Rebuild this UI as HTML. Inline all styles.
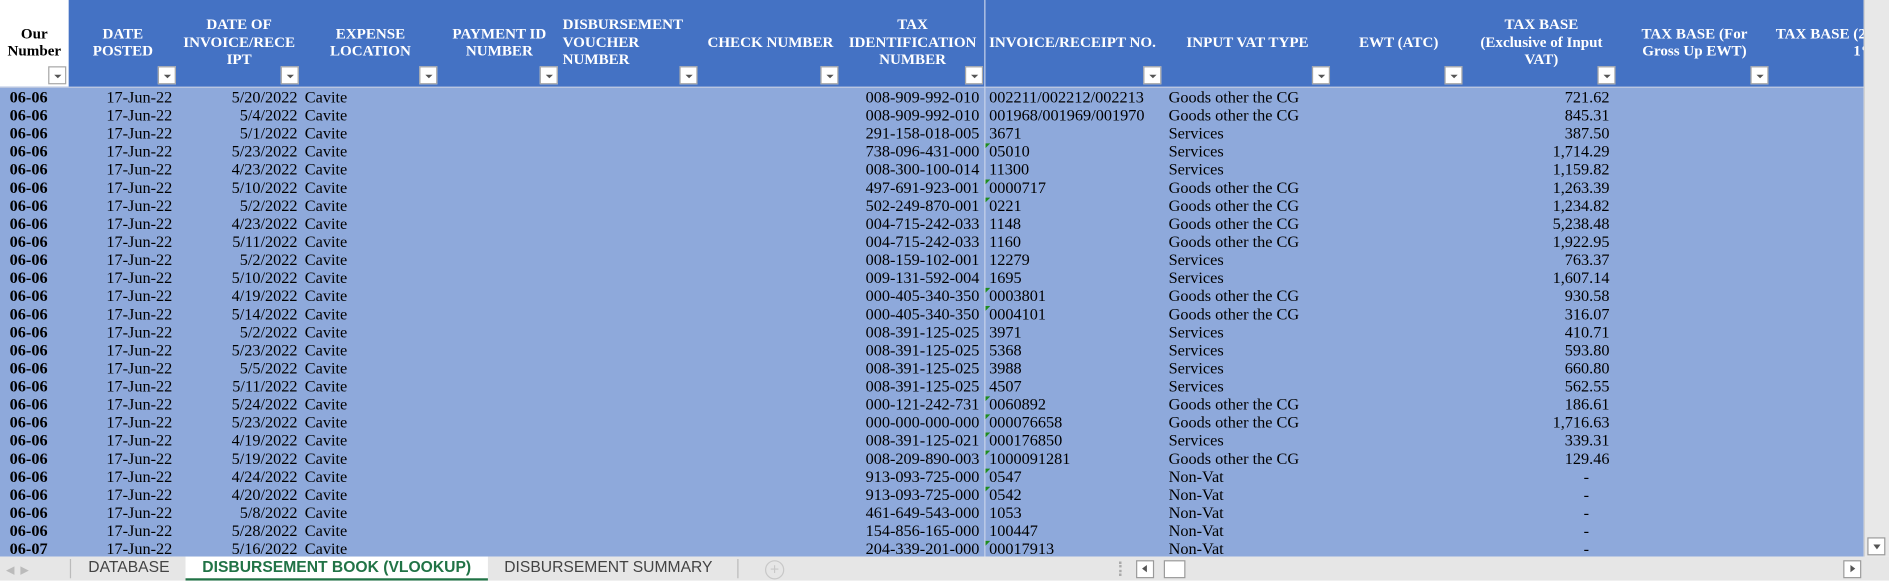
<!DOCTYPE html>
<html><head><meta charset="utf-8"><style>
html,body{margin:0;padding:0;width:1889px;height:581px;overflow:hidden;background:#fff}
#w{position:absolute;left:0;top:0;width:1568px;height:482.3px;transform:scale(1.20472);transform-origin:0 0;font-family:"Liberation Serif",serif;overflow:hidden}
#hd{position:absolute;left:0;top:0;width:1547px;height:72px;background:#4472C4}
.h{position:absolute;top:0;height:72px;color:#fff;font-weight:bold;font-size:12.5px;line-height:14.5px;display:flex;align-items:center;justify-content:center;text-align:center;padding-bottom:2px;box-sizing:border-box;overflow:hidden}
.dd{position:absolute;top:55px;width:15px;height:15px;background:#fff;border:1px solid #a6a6a6;box-sizing:border-box}
.dd::after{content:"";position:absolute;left:4px;top:6px;border-left:3px solid transparent;border-right:3px solid transparent;border-top:3px solid #555}
#body{position:absolute;left:0;top:72px;width:1547px;height:390px;background:#8EA9DB;border-top:1px solid #bcc8e0;box-sizing:border-box}
.r{height:15px;display:flex;font-size:13.5px;line-height:15px;white-space:nowrap;color:#000}
.r span{display:block;overflow:hidden;box-sizing:border-box;flex:none}
.r span:nth-child(1){width:57px;padding-left:8px;font-weight:bold}
.r span:nth-child(2){width:90px;text-align:right;padding-right:4px}
.r span:nth-child(3){width:103px;text-align:right;padding-right:3px}
.r span:nth-child(4){width:115px;padding-left:3px}
.r span:nth-child(5){width:99px}
.r span:nth-child(6){width:117px}
.r span:nth-child(7){width:117px}
.r span:nth-child(8){width:119px;text-align:right;padding-right:4px}
.r span:nth-child(9){width:148px;padding-left:4px;position:relative}
.r span:nth-child(10){width:141px;padding-left:5px}
.r span:nth-child(11){width:110px}
.r span:nth-child(12){width:127px;text-align:right;padding-right:7px}
.r span.d{padding-right:24px}
.r span.t::before{content:"";position:absolute;left:1px;top:1px;border-top:4px solid #1e8c1e;border-right:4px solid transparent}
#vl{position:absolute;left:817px;top:0;width:1px;height:462px;background:#c8d3ea}
#vs{position:absolute;left:1547px;top:0;width:21px;height:462px;background:#e8e8e8;border-left:1px solid #d0d0d0;box-sizing:border-box}
#vs .b{position:absolute;left:2px;top:446px;width:15px;height:15px;background:#fff;border:1px solid #999;box-sizing:border-box}
#tb{position:absolute;left:0;top:462px;width:1568px;height:21px;background:#e6e6e6;font-family:"Liberation Sans",sans-serif;font-size:13px;color:#444}
.tab{position:absolute;top:0;height:20px;line-height:17px}
</style></head><body><div id="w">
<div id="hd"></div>
<div class="h" style="left:0;width:57px;background:#fff;color:#000">Our<br>Number</div>
<div class="dd" style="left:40px"></div>
<div class="h" style="left:57px;width:90px">DATE<br>POSTED</div><div class="dd" style="left:131px"></div>
<div class="h" style="left:147px;width:103px">DATE OF<br>INVOICE/RECE<br>IPT</div><div class="dd" style="left:233px"></div>
<div class="h" style="left:250px;width:115px">EXPENSE<br>LOCATION</div><div class="dd" style="left:348px"></div>
<div class="h" style="left:365px;width:99px">PAYMENT ID<br>NUMBER</div><div class="dd" style="left:448px"></div>
<div class="h" style="left:464px;width:117px;justify-content:flex-start;text-align:left;padding-left:3px">DISBURSEMENT<br>VOUCHER<br>NUMBER</div><div class="dd" style="left:564px"></div>
<div class="h" style="left:581px;width:117px">CHECK NUMBER</div><div class="dd" style="left:681px"></div>
<div class="h" style="left:698px;width:119px">TAX<br>IDENTIFICATION<br>NUMBER</div><div class="dd" style="left:801px"></div>
<div class="h" style="left:817px;width:148px;justify-content:flex-start;padding-left:4px">INVOICE/RECEIPT NO.</div><div class="dd" style="left:949px"></div>
<div class="h" style="left:965px;width:141px">INPUT VAT TYPE</div><div class="dd" style="left:1089px"></div>
<div class="h" style="left:1106px;width:110px">EWT (ATC)</div><div class="dd" style="left:1199px"></div>
<div class="h" style="left:1216px;width:127px">TAX BASE<br>(Exclusive of Input<br>VAT)</div><div class="dd" style="left:1326px"></div>
<div class="h" style="left:1343px;width:127px">TAX BASE (For<br>Gross Up EWT)</div><div class="dd" style="left:1453px"></div>
<div class="h" style="left:1470px;width:77px;justify-content:flex-start;text-align:right;white-space:nowrap;padding-left:4px">TAX BASE (2%<br>&nbsp;&nbsp;&nbsp;&nbsp;&nbsp;&nbsp;&nbsp;&nbsp;&nbsp;&nbsp;&nbsp;&nbsp;1%)</div>
<div id="body">
<div class="r"><span>06-06</span><span>17-Jun-22</span><span>5/20/2022</span><span>Cavite</span><span></span><span></span><span></span><span>008-909-992-010</span><span>002211/002212/002213</span><span>Goods other the CG</span><span></span><span>721.62</span></div>
<div class="r"><span>06-06</span><span>17-Jun-22</span><span>5/4/2022</span><span>Cavite</span><span></span><span></span><span></span><span>008-909-992-010</span><span>001968/001969/001970</span><span>Goods other the CG</span><span></span><span>845.31</span></div>
<div class="r"><span>06-06</span><span>17-Jun-22</span><span>5/1/2022</span><span>Cavite</span><span></span><span></span><span></span><span>291-158-018-005</span><span>3671</span><span>Services</span><span></span><span>387.50</span></div>
<div class="r"><span>06-06</span><span>17-Jun-22</span><span>5/23/2022</span><span>Cavite</span><span></span><span></span><span></span><span>738-096-431-000</span><span class="t">05010</span><span>Services</span><span></span><span>1,714.29</span></div>
<div class="r"><span>06-06</span><span>17-Jun-22</span><span>4/23/2022</span><span>Cavite</span><span></span><span></span><span></span><span>008-300-100-014</span><span>11300</span><span>Services</span><span></span><span>1,159.82</span></div>
<div class="r"><span>06-06</span><span>17-Jun-22</span><span>5/10/2022</span><span>Cavite</span><span></span><span></span><span></span><span>497-691-923-001</span><span class="t">0000717</span><span>Goods other the CG</span><span></span><span>1,263.39</span></div>
<div class="r"><span>06-06</span><span>17-Jun-22</span><span>5/2/2022</span><span>Cavite</span><span></span><span></span><span></span><span>502-249-870-001</span><span class="t">0221</span><span>Goods other the CG</span><span></span><span>1,234.82</span></div>
<div class="r"><span>06-06</span><span>17-Jun-22</span><span>4/23/2022</span><span>Cavite</span><span></span><span></span><span></span><span>004-715-242-033</span><span>1148</span><span>Goods other the CG</span><span></span><span>5,238.48</span></div>
<div class="r"><span>06-06</span><span>17-Jun-22</span><span>5/11/2022</span><span>Cavite</span><span></span><span></span><span></span><span>004-715-242-033</span><span>1160</span><span>Goods other the CG</span><span></span><span>1,922.95</span></div>
<div class="r"><span>06-06</span><span>17-Jun-22</span><span>5/2/2022</span><span>Cavite</span><span></span><span></span><span></span><span>008-159-102-001</span><span>12279</span><span>Services</span><span></span><span>763.37</span></div>
<div class="r"><span>06-06</span><span>17-Jun-22</span><span>5/10/2022</span><span>Cavite</span><span></span><span></span><span></span><span>009-131-592-004</span><span>1695</span><span>Services</span><span></span><span>1,607.14</span></div>
<div class="r"><span>06-06</span><span>17-Jun-22</span><span>4/19/2022</span><span>Cavite</span><span></span><span></span><span></span><span>000-405-340-350</span><span class="t">0003801</span><span>Goods other the CG</span><span></span><span>930.58</span></div>
<div class="r"><span>06-06</span><span>17-Jun-22</span><span>5/14/2022</span><span>Cavite</span><span></span><span></span><span></span><span>000-405-340-350</span><span class="t">0004101</span><span>Goods other the CG</span><span></span><span>316.07</span></div>
<div class="r"><span>06-06</span><span>17-Jun-22</span><span>5/2/2022</span><span>Cavite</span><span></span><span></span><span></span><span>008-391-125-025</span><span>3971</span><span>Services</span><span></span><span>410.71</span></div>
<div class="r"><span>06-06</span><span>17-Jun-22</span><span>5/23/2022</span><span>Cavite</span><span></span><span></span><span></span><span>008-391-125-025</span><span>5368</span><span>Services</span><span></span><span>593.80</span></div>
<div class="r"><span>06-06</span><span>17-Jun-22</span><span>5/5/2022</span><span>Cavite</span><span></span><span></span><span></span><span>008-391-125-025</span><span>3988</span><span>Services</span><span></span><span>660.80</span></div>
<div class="r"><span>06-06</span><span>17-Jun-22</span><span>5/11/2022</span><span>Cavite</span><span></span><span></span><span></span><span>008-391-125-025</span><span>4507</span><span>Services</span><span></span><span>562.55</span></div>
<div class="r"><span>06-06</span><span>17-Jun-22</span><span>5/24/2022</span><span>Cavite</span><span></span><span></span><span></span><span>000-121-242-731</span><span class="t">0060892</span><span>Goods other the CG</span><span></span><span>186.61</span></div>
<div class="r"><span>06-06</span><span>17-Jun-22</span><span>5/23/2022</span><span>Cavite</span><span></span><span></span><span></span><span>000-000-000-000</span><span class="t">000076658</span><span>Goods other the CG</span><span></span><span>1,716.63</span></div>
<div class="r"><span>06-06</span><span>17-Jun-22</span><span>4/19/2022</span><span>Cavite</span><span></span><span></span><span></span><span>008-391-125-021</span><span class="t">000176850</span><span>Services</span><span></span><span>339.31</span></div>
<div class="r"><span>06-06</span><span>17-Jun-22</span><span>5/19/2022</span><span>Cavite</span><span></span><span></span><span></span><span>008-209-890-003</span><span class="t">1000091281</span><span>Goods other the CG</span><span></span><span>129.46</span></div>
<div class="r"><span>06-06</span><span>17-Jun-22</span><span>4/24/2022</span><span>Cavite</span><span></span><span></span><span></span><span>913-093-725-000</span><span class="t">0547</span><span>Non-Vat</span><span></span><span class="d">-</span></div>
<div class="r"><span>06-06</span><span>17-Jun-22</span><span>4/20/2022</span><span>Cavite</span><span></span><span></span><span></span><span>913-093-725-000</span><span class="t">0542</span><span>Non-Vat</span><span></span><span class="d">-</span></div>
<div class="r"><span>06-06</span><span>17-Jun-22</span><span>5/8/2022</span><span>Cavite</span><span></span><span></span><span></span><span>461-649-543-000</span><span>1053</span><span>Non-Vat</span><span></span><span class="d">-</span></div>
<div class="r"><span>06-06</span><span>17-Jun-22</span><span>5/28/2022</span><span>Cavite</span><span></span><span></span><span></span><span>154-856-165-000</span><span>100447</span><span>Non-Vat</span><span></span><span class="d">-</span></div>
<div class="r"><span>06-07</span><span>17-Jun-22</span><span>5/16/2022</span><span>Cavite</span><span></span><span></span><span></span><span>204-339-201-000</span><span class="t">00017913</span><span>Non-Vat</span><span></span><span class="d">-</span></div>
</div>
<div id="vl"></div>
<div id="vs"><div class="b"><div style="position:absolute;left:4px;top:5px;border-left:3px solid transparent;border-right:3px solid transparent;border-top:4px solid #555"></div></div></div>
<div id="tb">
<div style="position:absolute;left:5px;top:6px;color:#bbb;font-size:9px">◀ &nbsp;▶</div>
<div style="position:absolute;left:58px;top:2px;width:1px;height:16px;background:#bbb"></div>
<div class="tab" style="left:60px;width:94px;text-align:center">DATABASE</div>
<div class="tab" style="left:154px;width:251px;background:#fff;color:#217346;font-weight:bold;text-align:center;border-bottom:2px solid #217346;height:18px">DISBURSEMENT BOOK (VLOOKUP)</div>
<div class="tab" style="left:405px;width:200px;text-align:center">DISBURSEMENT SUMMARY</div>
<div style="position:absolute;left:612px;top:2px;width:1px;height:16px;background:#bbb"></div>
<div style="position:absolute;left:635px;top:3px;width:14px;height:14px;border:1px solid #c8c8c8;border-radius:50%;color:#c8c8c8;font-size:13px;line-height:13px;text-align:center">+</div>
<div style="position:absolute;left:929px;top:4px;width:2px;height:12px;border-left:2px dotted #aaa"></div>
<div style="position:absolute;left:943px;top:3px;width:15px;height:15px;background:#fff;border:1px solid #999;box-sizing:border-box"><div style="position:absolute;left:4px;top:3px;border-top:3px solid transparent;border-bottom:3px solid transparent;border-right:4px solid #555"></div></div>
<div style="position:absolute;left:966px;top:3px;width:18px;height:15px;background:#fff;border:1px solid #999;box-sizing:border-box"></div>
<div style="position:absolute;left:1530px;top:3px;width:15px;height:15px;background:#fff;border:1px solid #999;box-sizing:border-box"><div style="position:absolute;left:5px;top:3px;border-top:3px solid transparent;border-bottom:3px solid transparent;border-left:4px solid #555"></div></div>
</div>
</div></body></html>
